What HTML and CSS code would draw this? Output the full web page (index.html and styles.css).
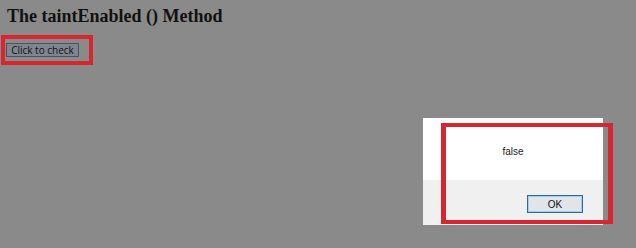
FILE: index.html
```html
<!DOCTYPE html>
<html lang="en">
<head>
    <meta charset="UTF-8">
    <title>The taintEnabled () Method</title>
    <link rel="stylesheet" href="styles.css">
</head>
<body>
    <h1>The taintEnabled () Method</h1>
    <button type="button" class="check-btn">Click to check</button>

    <!-- alert box -->
    <div class="dialog">
        <div class="dialog-msg">false</div>
        <div class="dialog-footer">
            <button type="button" class="ok-btn">OK</button>
        </div>
    </div>

    <!-- red highlight marks -->
    <div class="mark mark-btn"></div>
    <div class="mark mark-dialog"></div>
</body>
</html>
```

FILE: styles.css
```css
* {
    box-sizing: border-box;
}

body {
    margin: 0;
    padding: 6px 0 0 7px;
    width: 636px;
    height: 248px;
    background: #8a8a8a;
    overflow: hidden;
    position: relative;
}

h1 {
    margin: 0;
    font-family: 'Liberation Serif', serif;
    font-size: 18px;
    line-height: 20px;
    font-weight: bold;
    color: #111;
}

.check-btn {
    display: block;
    margin: 17px 0 0 -1px;
    width: 73px;
    height: 14px;
    padding: 0;
    font-family: 'Open Sans', sans-serif;
    font-size: 10px;
    line-height: 12px;
    color: #111;
    background: #7f8591;
    border: 1px solid #4b5363;
}

.dialog {
    position: absolute;
    left: 423px;
    top: 118px;
    width: 180px;
    height: 107px;
    background: #fff;
    display: flex;
    flex-direction: column;
}

.dialog-msg {
    height: 62px;
    padding-top: 28px;
    text-align: center;
    font-family: 'Liberation Sans', sans-serif;
    font-size: 10px;
    line-height: 12px;
    color: #222;
}

.dialog-footer {
    flex: 1;
    background: #f0f0f0;
    display: flex;
    justify-content: flex-end;
    align-items: flex-start;
    padding: 15px 20px 0 0;
}

.ok-btn {
    width: 56px;
    height: 18px;
    padding: 0;
    font-family: 'Liberation Sans', sans-serif;
    font-size: 10px;
    color: #111;
    background: #e1e4e8;
    border: 1px solid #2a6aa6;
    box-shadow: inset 0 0 0 1px #a9cbe8;
}

.mark {
    position: absolute;
    border: 4px solid #d62731;
}

.mark-btn {
    left: 1px;
    top: 35px;
    width: 92px;
    height: 30px;
}

.mark-dialog {
    left: 441px;
    top: 123px;
    width: 172px;
    height: 101px;
    border-left-width: 5px;
    border-right-width: 5px;
}
```
